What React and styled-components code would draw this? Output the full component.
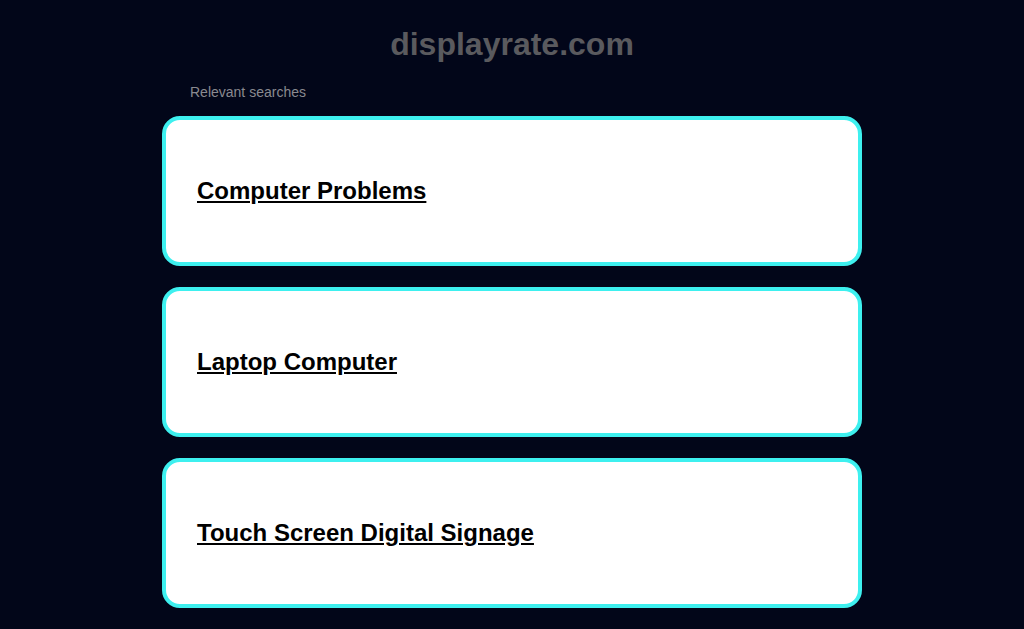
import styled, { createGlobalStyle } from "styled-components";

const GlobalStyle = createGlobalStyle`
  html, body {
    margin: 0;
    padding: 0;
    background: #020619;
    font-family: "Liberation Sans", Arial, sans-serif;
  }
`;

const Page = styled.div`
  min-height: 629px;
  background: #020619;
  display: flex;
  flex-direction: column;
  align-items: center;
  padding-top: 27px;
  box-sizing: border-box;
`;

const Title = styled.h1`
  margin: 0;
  font-size: 32px;
  line-height: 34px;
  font-weight: bold;
  color: #5a5a5e;
  text-align: center;
`;

const Results = styled.div`
  width: 700px;
  display: flex;
  flex-direction: column;
  margin-top: 23px;
`;

const Label = styled.div`
  font-size: 14px;
  line-height: 16px;
  color: #8a8a90;
  padding-left: 28px;
  margin-bottom: 16px;
`;

const CardList = styled.div`
  display: flex;
  flex-direction: column;
  gap: 21px;
`;

const Card = styled.div`
  box-sizing: border-box;
  height: 150px;
  background: #fff;
  border: 4px solid #3ef0ef;
  border-radius: 18px;
  padding: 0 31px;
  display: flex;
  align-items: center;
`;

const SearchLink = styled.a`
  font-size: 24px;
  font-weight: bold;
  color: #000;
  text-decoration: underline;
  cursor: pointer;
`;

const searches = [
  "Computer Problems",
  "Laptop Computer",
  "Touch Screen Digital Signage",
];

const App = () => {
  return (
    <>
      <GlobalStyle />
      <Page>
        <Title>displayrate.com</Title>
        <Results>
          <Label>Relevant searches</Label>
          <CardList>
            {searches.map((s) => (
              <Card key={s}>
                <SearchLink>{s}</SearchLink>
              </Card>
            ))}
          </CardList>
        </Results>
      </Page>
    </>
  );
};

export default App;
